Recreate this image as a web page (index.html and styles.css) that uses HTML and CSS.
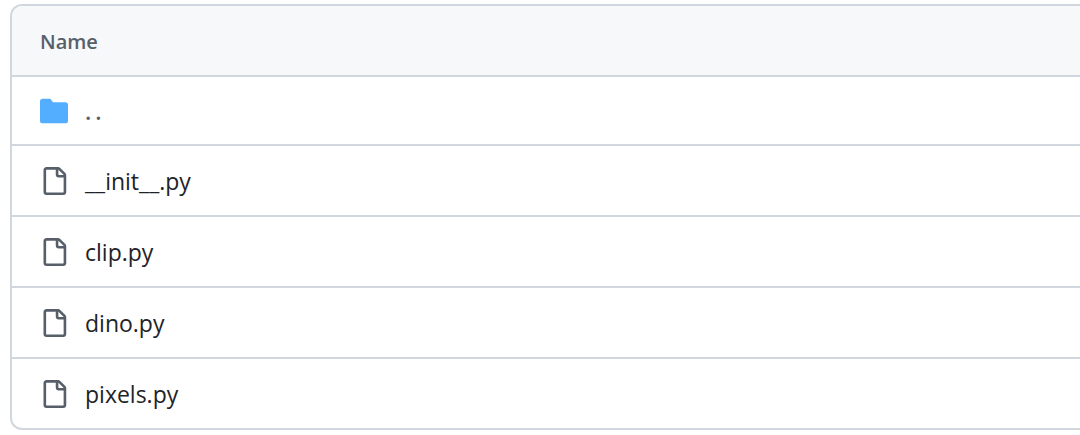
FILE: index.html
```html
<!DOCTYPE html>
<html lang="en">
<head>
  <meta charset="UTF-8">
  <meta name="viewport" content="width=device-width, initial-scale=1.0">
  <title>Files</title>
  <link rel="stylesheet" href="styles.css">
</head>
<body>
  <!-- Shared file icon -->
  <svg class="icon-defs" aria-hidden="true">
    <symbol id="icon-file" viewBox="0 0 16 16">
      <path d="M2 1.75C2 .784 2.784 0 3.75 0h6.586c.464 0 .909.184 1.237.513l2.914 2.914c.329.328.513.773.513 1.237v9.586A1.75 1.75 0 0 1 13.25 16h-9.5A1.75 1.75 0 0 1 2 14.25Zm1.75-.25a.25.25 0 0 0-.25.25v12.5c0 .138.112.25.25.25h9.5a.25.25 0 0 0 .25-.25V6h-2.75A1.75 1.75 0 0 1 9 4.25V1.5Zm6.75.062V4.25c0 .138.112.25.25.25h2.688l-.011-.013-2.914-2.914-.013-.011Z"/>
    </symbol>
  </svg>

  <main class="file-browser">
    <table class="file-table">
      <thead>
        <tr>
          <th scope="col">Name</th>
        </tr>
      </thead>
      <tbody>
        <tr class="parent-row">
          <td>
            <a class="file-link parent-link" href="#" aria-label="Parent directory">
              <svg class="icon icon-folder" viewBox="0 0 16 16" aria-hidden="true">
                <path d="M1.5 1A1.5 1.5 0 0 0 0 2.5v11A1.5 1.5 0 0 0 1.5 15h13a1.5 1.5 0 0 0 1.5-1.5v-9A1.5 1.5 0 0 0 14.5 3H7.7a.5.5 0 0 1-.4-.2l-.7-1C6.2 1.25 5.8 1 5.2 1H1.5Z"/>
              </svg>
              <span>.&#8198;.</span>
            </a>
          </td>
        </tr>
        <tr>
          <td><a class="file-link" href="#"><svg class="icon" aria-hidden="true"><use href="#icon-file"/></svg><span>__init__.py</span></a></td>
        </tr>
        <tr>
          <td><a class="file-link" href="#"><svg class="icon" aria-hidden="true"><use href="#icon-file"/></svg><span>clip.py</span></a></td>
        </tr>
        <tr>
          <td><a class="file-link" href="#"><svg class="icon" aria-hidden="true"><use href="#icon-file"/></svg><span>dino.py</span></a></td>
        </tr>
        <tr>
          <td><a class="file-link" href="#"><svg class="icon" aria-hidden="true"><use href="#icon-file"/></svg><span>pixels.py</span></a></td>
        </tr>
      </tbody>
    </table>
  </main>
</body>
</html>
```
FILE: styles.css
```css
/* General styles */
* {
  box-sizing: border-box;
}

body {
  margin: 0;
  font-family: "Segoe UI", "Open Sans", "Noto Sans", sans-serif;
  background-color: #fff;
  color: #1f2328;
}

.icon-defs {
  display: none;
}

/* File list */
.file-browser {
  margin: 4px 0 0 10px;
  border: 2px solid #d0d7de;
  border-right: 0;
  border-radius: 12px 0 0 12px;
  overflow: hidden;
}

.file-table {
  width: 100%;
  border-collapse: separate;
  border-spacing: 0;
}

.file-table th {
  height: 69px;
  padding: 2px 28px 0;
  background-color: #f6f8fa;
  color: #57606a;
  font-size: 20px;
  font-weight: 600;
  text-align: left;
}

.file-table td {
  height: 71px;
  padding: 0 28px;
  border-top: 2px solid #d0d7de;
}

.file-table .parent-row td {
  height: 69px;
}

.file-link {
  display: flex;
  align-items: center;
  gap: 17px;
  color: #1f2328;
  font-size: 23px;
  line-height: 36px;
  text-decoration: none;
}

.icon {
  flex: none;
  width: 28px;
  height: 28px;
  fill: #57606a;
}

.icon-folder {
  fill: #54aeff;
}

.parent-link {
  color: #57606a;
  font-weight: 600;
}
```
